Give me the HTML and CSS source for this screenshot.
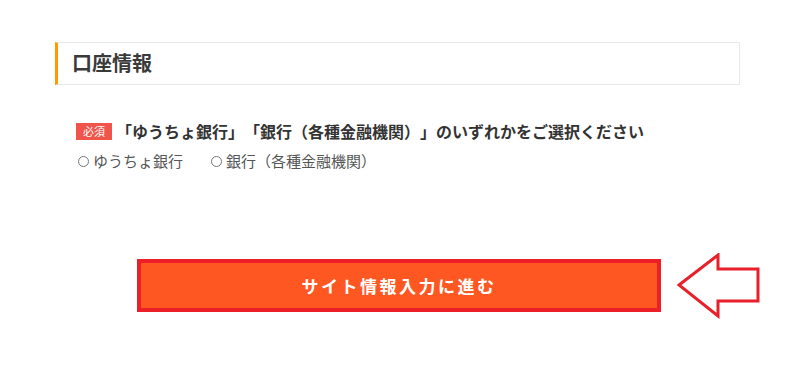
FILE: index.html
```html
<!DOCTYPE html>
<html lang="ja">
<head>
<meta charset="utf-8">
<link rel="stylesheet" href="styles.css">
</head>
<body>
<div class="page">
  <div class="section-head">口座情報</div>
  <div class="question">
    <div class="q-title"><span class="badge">必須</span><span class="q-text">「ゆうちょ銀行」「銀行（各種金融機関）」のいずれかをご選択ください</span></div>
    <div class="options">
      <label class="opt"><span class="radio"></span>ゆうちょ銀行</label>
      <label class="opt"><span class="radio"></span>銀行（各種金融機関）</label>
    </div>
  </div>
  <div class="action">
    <div class="btn">サイト情報入力に進む</div>
    <svg class="arrow" width="84" height="66" viewBox="0 0 84 66">
      <path d="M2 32 L41 2 L41 16 L81 16 L81 48 L41 48 L41 63 Z" fill="#fff" stroke="#e8202a" stroke-width="3" stroke-linejoin="miter"/>
    </svg>
  </div>
</div>
</body>
</html>
```
FILE: styles.css
```css
html, body { margin: 0; padding: 0; background: #fff; }
body {
  font-family: "Noto Sans CJK JP", "Noto Sans", sans-serif;
  color: #333;
  text-spacing-trim: space-all;
}
.page {
  width: 685px;
  margin-left: 55px;
  padding-top: 42px;
}
.section-head {
  height: 41px;
  border: 1px solid #e8e8e8;
  border-left: 3px solid #ff9a00;
  display: flex;
  align-items: center;
  padding-left: 14px;
  padding-bottom: 2px;
  box-sizing: content-box;
  height: 39px;
  font-size: 20px;
  font-weight: bold;
  color: #3a3a3a;
  line-height: 1;
}
.question {
  margin-top: 35px;
  padding-left: 21px;
}
.q-title {
  display: flex;
  align-items: center;
  height: 22px;
}
.badge {
  flex: none;
  width: 36px;
  height: 17px;
  background: #f0544a;
  color: #fff;
  font-size: 11px;
  line-height: 17px;
  text-align: center;
  margin-right: 4px;
  font-weight: normal;
}
.q-text {
  font-size: 16px;
  font-weight: bold;
  color: #333;
  white-space: nowrap;
}
.options {
  display: flex;
  margin-top: 9px;
  font-size: 15px;
  color: #555;
  line-height: 20px;
}
.opt {
  display: flex;
  align-items: center;
  margin-right: 26px;
}
.radio {
  width: 11px;
  height: 11px;
  border: 1px solid #777;
  border-radius: 50%;
  margin-right: 4px;
  margin-left: 2px;
  box-sizing: border-box;
}
.action {
  display: flex;
  align-items: center;
  margin-top: 80px;
  margin-left: 82px;
}
.btn {
  flex: none;
  width: 516px;
  height: 45px;
  border: 4px solid #ec1e28;
  background: #ff5722;
  color: #fff;
  font-size: 17px;
  font-weight: bold;
  letter-spacing: 2.5px;
  display: flex;
  align-items: center;
  justify-content: center;
}
.arrow {
  flex: none;
  margin-left: 16px;
  margin-top: 2px;
}
```
